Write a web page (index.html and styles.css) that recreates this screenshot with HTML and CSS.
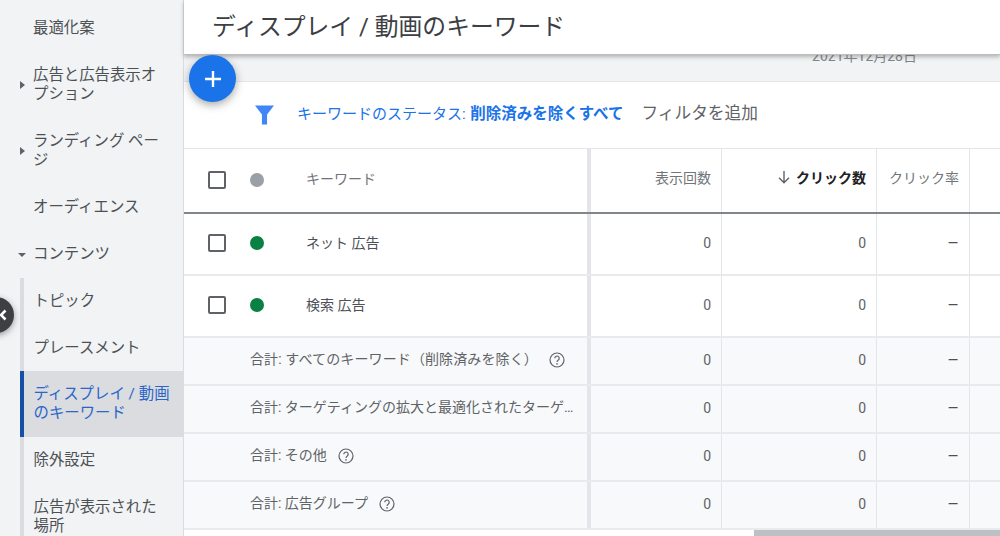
FILE: index.html
```html
<!DOCTYPE html>
<html lang="ja">
<head>
<meta charset="utf-8">
<title>ディスプレイ / 動画のキーワード</title>
<link rel="stylesheet" href="styles.css">
</head>
<body>
<div class="app">
  <nav class="sidebar">
    <div class="nav-item">最適化案</div>
    <div class="nav-item"><span class="tri-right"></span>広告と広告表示オプション</div>
    <div class="nav-item"><span class="tri-right"></span>ランディング ページ</div>
    <div class="nav-item">オーディエンス</div>
    <div class="nav-item"><span class="tri-down"></span>コンテンツ</div>
    <div class="subnav">
      <div class="nav-item sub">トピック</div>
      <div class="nav-item sub tight">プレースメント</div>
      <div class="nav-item sub active">ディスプレイ / 動画のキーワード</div>
      <div class="nav-item sub">除外設定</div>
      <div class="nav-item sub">広告が表示された場所</div>
    </div>
  </nav>
  <main class="main">
    <header class="title-bar"><h1 class="title">ディスプレイ / 動画のキーワード</h1></header>
    <div class="date-band"><span class="date">2021年12月28日</span></div>
    <div class="filter-bar">
      <svg class="funnel" viewBox="0 0 20 20" width="20" height="20"><path d="M0 0H20L12.7 9.6V20H7.3V9.6Z" fill="#4285f4"/></svg>
      <span class="filter-status">キーワードのステータス: <b>削除済みを除くすべて</b></span>
      <span class="filter-add">フィルタを追加</span>
    </div>
    <div class="table">
      <div class="row head">
        <div class="cell key"><span class="check"></span><span class="dot grey"></span><span class="name muted">キーワード</span></div>
        <div class="cell c1 muted">表示回数</div>
        <div class="cell c2 sorted"><svg class="arrow" viewBox="0 0 14 14" width="14" height="14"><path d="M7 1V12.5M2 7.8 7 12.7 12 7.8" fill="none" stroke="#5f6368" stroke-width="1.4"/></svg>クリック数</div>
        <div class="cell c3 muted">クリック率</div>
        <div class="cell c4"></div>
      </div>
      <div class="row body">
        <div class="cell key"><span class="check"></span><span class="dot green"></span><span class="name">ネット 広告</span></div>
        <div class="cell c1">0</div><div class="cell c2">0</div><div class="cell c3"><span class="dash">–</span></div><div class="cell c4"></div>
      </div>
      <div class="row body thick">
        <div class="cell key"><span class="check"></span><span class="dot green"></span><span class="name">検索 広告</span></div>
        <div class="cell c1">0</div><div class="cell c2">0</div><div class="cell c3"><span class="dash">–</span></div><div class="cell c4"></div>
      </div>
      <div class="row total">
        <div class="cell key"><span class="label wide">合計: すべてのキーワード（削除済みを除く）</span><svg class="help" viewBox="0 0 16 16" width="16" height="16"><circle cx="8" cy="8" r="7" fill="none" stroke="#5f6368" stroke-width="1.2"/><path d="M5.8 6.3A2.2 2.2 0 1 1 9.3 8C8.4 8.6 8 9 8 10" fill="none" stroke="#5f6368" stroke-width="1.2"/><circle cx="8" cy="11.9" r=".8" fill="#5f6368"/></svg></div>
        <div class="cell c1">0</div><div class="cell c2">0</div><div class="cell c3"><span class="dash">–</span></div><div class="cell c4"></div>
      </div>
      <div class="row total">
        <div class="cell key"><span class="label clip">合計: ターゲティングの拡大と最適化されたターゲティングのキーワード</span></div>
        <div class="cell c1">0</div><div class="cell c2">0</div><div class="cell c3"><span class="dash">–</span></div><div class="cell c4"></div>
      </div>
      <div class="row total">
        <div class="cell key"><span class="label">合計: その他</span><svg class="help" viewBox="0 0 16 16" width="16" height="16"><circle cx="8" cy="8" r="7" fill="none" stroke="#5f6368" stroke-width="1.2"/><path d="M5.8 6.3A2.2 2.2 0 1 1 9.3 8C8.4 8.6 8 9 8 10" fill="none" stroke="#5f6368" stroke-width="1.2"/><circle cx="8" cy="11.9" r=".8" fill="#5f6368"/></svg></div>
        <div class="cell c1">0</div><div class="cell c2">0</div><div class="cell c3"><span class="dash">–</span></div><div class="cell c4"></div>
      </div>
      <div class="row total">
        <div class="cell key"><span class="label">合計: 広告グループ</span><svg class="help" viewBox="0 0 16 16" width="16" height="16"><circle cx="8" cy="8" r="7" fill="none" stroke="#5f6368" stroke-width="1.2"/><path d="M5.8 6.3A2.2 2.2 0 1 1 9.3 8C8.4 8.6 8 9 8 10" fill="none" stroke="#5f6368" stroke-width="1.2"/><circle cx="8" cy="11.9" r=".8" fill="#5f6368"/></svg></div>
        <div class="cell c1">0</div><div class="cell c2">0</div><div class="cell c3"><span class="dash">–</span></div><div class="cell c4"></div>
      </div>
    </div>
    <div class="scroll-track"><div class="scroll-thumb"></div></div>
  </main>
  <button class="fab" type="button" aria-label="追加"><svg viewBox="0 0 18 18" width="18" height="18"><path d="M9 1V17M1 9H17" stroke="#fff" stroke-width="2.4" fill="none"/></svg></button>
  <div class="collapse"><svg viewBox="0 0 8 12" width="8" height="12"><path d="M6.5 1.5 2 6 6.5 10.5" stroke="#fff" stroke-width="2.6" fill="none"/></svg></div>
</div>
</body>
</html>
```
FILE: styles.css
```css
* { box-sizing: border-box; }
html, body { margin: 0; height: 100%; overflow: hidden; }
body {
  font-family: Roboto, "Noto Sans CJK JP", "Liberation Sans", sans-serif;
  color: #3c4043;
  background: #fff;
}
.app { position: relative; display: flex; width: 1000px; height: 536px; overflow: hidden; }

.sidebar {
  flex: 0 0 184px;
  padding-top: 5px;
  background: #f1f3f4;
  border-right: 1px solid #dadce0;
  overflow: hidden;
}
.nav-item {
  position: relative;
  padding: 14px 12px 14px 33px;
  font-size: 15.4px;
  line-height: 19px;
  color: #4d5156;
}
.tri-right, .tri-down { position: absolute; width: 0; height: 0; border-style: solid; }
.tri-right { left: 20px; top: 50%; margin-top: -4px; border-width: 4px 0 4px 5px; border-color: transparent transparent transparent #5f6368; }
.tri-down { left: 18px; top: 22px; border-width: 4px 4px 0; border-color: #5f6368 transparent transparent; }
.subnav { margin-left: 20px; border-left: 4px solid #dadce0; }
.nav-item.sub { padding-left: 9.5px; }
.nav-item.tight { padding-bottom: 13px; }
.nav-item.active {
  margin-left: -4px;
  padding-left: 9.5px;
  background: #dadce0;
  border-left: 4px solid #174ea6;
  color: #2a66c8;
}

.main { flex: 1; min-width: 0; display: flex; flex-direction: column; position: relative; }
.title-bar {
  position: relative;
  z-index: 2;
  flex: 0 0 54px;
  padding-left: 28px;
  background: #fff;
  border-bottom: 1px solid #bdbdbd;
  box-shadow: 0 2px 4px rgba(60, 64, 67, .35);
}
.title { margin: 0; font-size: 23.8px; font-weight: 400; line-height: 54px; color: #3c4043; }
.date-band {
  flex: 0 0 27px;
  padding-right: 83px;
  text-align: right;
  background: #f1f3f4;
  border-bottom: 1px solid #e3e5e8;
  overflow: hidden;
}
.date { display: block; margin-top: -9px; font-size: 14px; line-height: 20px; color: #80868b; }
.filter-bar {
  flex: 0 0 66px;
  display: flex;
  align-items: center;
  padding: 0 0 7px 70px;
  background: #fff;
}
.funnel { margin: 7px 23px 0 1px; width: 19px; }
.filter-status { font-size: 15px; word-spacing: .8px; color: #1a73e8; }
.filter-status b { font-size: 15.5px; font-weight: 700; }
.filter-add { margin-left: 18px; font-size: 16.7px; color: #5f6368; }

.table { flex: none; border-top: 1px solid #e3e5e8; }
.row { display: grid; grid-template-columns: 407px 131px 155px 93px 30px; border-bottom: 2px solid #e8eaed; }
.row.head { height: 65px; border-bottom-color: #80868b; }
.row.body { height: 62px; }
.row.total { height: 48px; background: #f8f9fa; }
.cell {
  display: flex;
  align-items: center;
  justify-content: flex-end;
  padding: 0 10px 3px 0;
  font-size: 14px;
  color: #5f6368;
  border-right: 1px solid #e3e5e8;
  white-space: nowrap;
}
.row.head .cell { padding-bottom: 7px; }
.row.head .cell.key { padding-bottom: 2px; }
.cell.key { justify-content: flex-start; padding: 0 0 2px 24px; border-right: 4px solid #e3e5e8; overflow: hidden; }
.row.total .cell.key { padding-left: 66px; }
.c4 { border-right: 0; }
.check { flex: none; width: 18px; height: 18px; border: 2px solid #5f6368; border-radius: 2px; }
.dot { flex: none; width: 14px; height: 14px; margin-left: 24px; border-radius: 50%; }
.dot.grey { background: #9aa0a6; }
.dot.green { background: #0b8043; }
.name { margin: 0 0 3px 42px; color: #4d5156; }
.head .name { margin-bottom: 4px; }
.name.muted, .muted { color: #70757a; }
.sorted { font-weight: 700; color: #202124; }
.arrow { margin-right: 5px; }
.label { margin-bottom: 5px; font-size: 14px; color: #5f6368; }
.label.wide { letter-spacing: .12px; }
.label.clip { max-width: 325px; overflow: hidden; text-overflow: ellipsis; }
.help { flex: none; margin-left: 11px; }
.dash { font-size: 18px; line-height: 14px; color: #4d5156; }

.scroll-track { flex: 1; display: flex; justify-content: flex-end; }
.scroll-thumb { width: 246px; background: #bdc1c6; }

.fab {
  position: absolute;
  left: 189px;
  top: 55px;
  z-index: 3;
  width: 47px;
  height: 47px;
  display: flex;
  align-items: center;
  justify-content: center;
  padding: 0;
  border: 0;
  border-radius: 50%;
  background: #1a73e8;
  box-shadow: 0 3px 8px rgba(60, 64, 67, .45);
}
.collapse {
  position: absolute;
  left: -22px;
  top: 297px;
  z-index: 3;
  width: 36px;
  height: 36px;
  display: flex;
  align-items: center;
  justify-content: flex-end;
  padding-right: 7px;
  border-radius: 50%;
  background: #3c4043;
  box-shadow: 0 2px 6px rgba(60, 64, 67, .5);
}
```
